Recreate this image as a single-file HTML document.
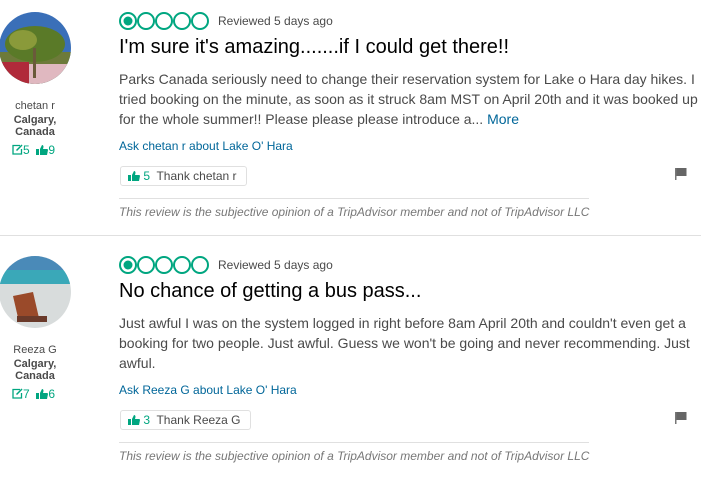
<!DOCTYPE html>
<html><head><style>
body{margin:0;width:701px;height:467px;overflow:hidden;background:#fff;font-family:"Liberation Sans",sans-serif;position:relative}
.r{position:absolute;left:0;width:701px;height:236px}
.av{position:absolute;left:-1px;top:12px;width:72px;height:72px;border-radius:50%;overflow:hidden}
.name{position:absolute;left:0;width:70px;text-align:center;top:100px;font-size:11px;color:#4a4a4a}
.loc{position:absolute;left:0;width:70px;text-align:center;top:114px;font-size:11px;font-weight:bold;color:#4a4a4a;line-height:12px}
.cnt{position:absolute;left:12px;top:143px;font-size:12px;color:#00a680}
.cnt svg{vertical-align:-1px}
.stars{position:absolute;left:119px;top:12px}
.rev{position:absolute;left:218px;top:14px;font-size:12px;color:#4a4a4a}
.t{position:absolute;left:119px;top:36px;font-size:20px;color:#000}
.b{position:absolute;left:119px;top:69px;width:585px;font-size:14px;line-height:20px;color:#4a4a4a}
.b a{color:#006699}
.ask{position:absolute;left:119px;top:139px;font-size:12px;color:#006699}
.th{position:absolute;left:120px;top:166px;height:18px;border:1px solid #e0e0e0;border-radius:3px;font-size:12px;color:#4a4a4a;line-height:18px;padding:0 9px 0 7px}
.th b{color:#00a680;font-weight:normal}
.th svg{vertical-align:-1px}
.sep{position:absolute;left:119px;top:198px;width:470px;border-top:1px solid #e0e0e0}
.dis{position:absolute;left:119px;top:205px;font-size:12px;font-style:italic;color:#777}
.fl{position:absolute;left:674px;top:167px}
.hr{position:absolute;left:0;top:235px;width:701px;border-top:1px solid #e0e0e0}
</style></head><body>
<svg width="0" height="0" style="position:absolute"><defs>
<symbol id="tu" viewBox="0 0 12 10"><rect x="0" y="4" width="3" height="6" fill="#00a680"/><path d="M4 4 L6 0 Q7.5 0 7.5 2 L7 4 L11 4 Q12 4 12 5 L11 10 L4 10 Z" fill="#00a680"/></symbol>
<symbol id="ed" viewBox="0 0 11 11"><path d="M8 1.5 H1 V10 H9.5 V5" fill="none" stroke="#00a680" stroke-width="1.3"/><path d="M4.5 6.5 L10 1" stroke="#00a680" stroke-width="1.5"/></symbol>
</defs></svg>
<div class="r" style="top:0">
<div class="av"><svg width="72" height="72"><rect width="72" height="72" fill="#3a6fb8"/><rect y="40" width="72" height="32" fill="#6d7a3a"/><rect x="0" y="50" width="30" height="22" fill="#b02a3a"/><rect x="30" y="52" width="42" height="20" fill="#e0b8c0"/><ellipse cx="36" cy="32" rx="30" ry="18" fill="#5a7a28"/><ellipse cx="24" cy="28" rx="14" ry="10" fill="#8a9a3a"/><rect x="34" y="36" width="3" height="30" fill="#6a5a3a"/></svg></div>
<div class="name">chetan r</div>
<div class="loc">Calgary,<br>Canada</div>
<div class="cnt"><svg width="11" height="11"><use href="#ed"/></svg>5 &nbsp;<svg width="12" height="10"><use href="#tu"/></svg>9</div>
<svg class="stars" width="92" height="18"><g fill="none" stroke="#00a680" stroke-width="2"><circle cx="9" cy="9" r="8"/><circle cx="27" cy="9" r="8"/><circle cx="45" cy="9" r="8"/><circle cx="63" cy="9" r="8"/><circle cx="81" cy="9" r="8"/></g><circle cx="9" cy="9" r="4.5" fill="#00a680"/></svg>
<div class="rev">Reviewed 5 days ago</div>
<div class="t">I'm sure it's amazing.......if I could get there!!</div>
<div class="b">Parks Canada seriously need to change their reservation system for Lake o Hara day hikes. I tried booking on the minute, as soon as it struck 8am MST on April 20th and it was booked up for the whole summer!! Please please please introduce a... <a>More</a></div>
<div class="ask">Ask chetan r about Lake O' Hara</div>
<div class="th"><b><svg width="12" height="10"><use href="#tu"/></svg> 5</b>&nbsp; Thank chetan r</div>
<svg class="fl" width="14" height="14"><rect x="1" y="1" width="1.5" height="12" fill="#777"/><rect x="2.5" y="1" width="10" height="8" fill="#666"/></svg>
<div class="sep"></div>
<div class="dis">This review is the subjective opinion of a TripAdvisor member and not of TripAdvisor LLC</div>
<div class="hr"></div>
</div>
<div class="r" style="top:244px">
<div class="av"><svg width="72" height="72"><rect width="72" height="72" fill="#d8dcdc"/><rect width="72" height="14" fill="#4a8ab8"/><rect y="14" width="72" height="14" fill="#3aa8b8"/><polygon points="14,40 34,36 40,62 20,66" fill="#9a4a2a"/><rect x="18" y="60" width="30" height="6" fill="#6a3a2a"/></svg></div>
<div class="name">Reeza G</div>
<div class="loc">Calgary,<br>Canada</div>
<div class="cnt"><svg width="11" height="11"><use href="#ed"/></svg>7 &nbsp;<svg width="12" height="10"><use href="#tu"/></svg>6</div>
<svg class="stars" width="92" height="18"><g fill="none" stroke="#00a680" stroke-width="2"><circle cx="9" cy="9" r="8"/><circle cx="27" cy="9" r="8"/><circle cx="45" cy="9" r="8"/><circle cx="63" cy="9" r="8"/><circle cx="81" cy="9" r="8"/></g><circle cx="9" cy="9" r="4.5" fill="#00a680"/></svg>
<div class="rev">Reviewed 5 days ago</div>
<div class="t">No chance of getting a bus pass...</div>
<div class="b">Just awful I was on the system logged in right before 8am April 20th and couldn't even get a booking for two people. Just awful. Guess we won't be going and never recommending. Just awful.</div>
<div class="ask">Ask Reeza G about Lake O' Hara</div>
<div class="th"><b><svg width="12" height="10"><use href="#tu"/></svg> 3</b>&nbsp; Thank Reeza G</div>
<svg class="fl" width="14" height="14"><rect x="1" y="1" width="1.5" height="12" fill="#777"/><rect x="2.5" y="1" width="10" height="8" fill="#666"/></svg>
<div class="sep"></div>
<div class="dis">This review is the subjective opinion of a TripAdvisor member and not of TripAdvisor LLC</div>
</div>
</body></html>
